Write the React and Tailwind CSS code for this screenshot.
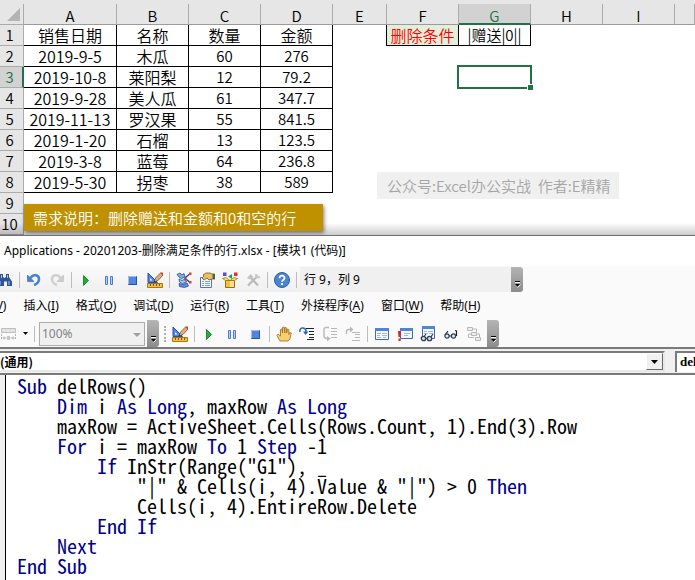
import React from "react";

const headers = ["A", "B", "C", "D", "E", "F", "G", "H", "I", ""];
const rows = [
  ["销售日期", "名称", "数量", "金额"],
  ["2019-9-5", "木瓜", "60", "276"],
  ["2019-10-8", "莱阳梨", "12", "79.2"],
  ["2019-9-28", "美人瓜", "61", "347.7"],
  ["2019-11-13", "罗汉果", "55", "841.5"],
  ["2019-1-20", "石榴", "13", "123.5"],
  ["2019-3-8", "蓝莓", "64", "236.8"],
  ["2019-5-30", "拐枣", "38", "589"],
  [],
  [],
];

const menus = [
  ["视图", "V"],
  ["插入", "I"],
  ["格式", "O"],
  ["调试", "D"],
  ["运行", "R"],
  ["工具", "T"],
  ["外接程序", "A"],
  ["窗口", "W"],
  ["帮助", "H"],
];

// "k" marks a keyword, everything else is plain code
const code = [
  [["k", "Sub"], ["", " delRows()"]],
  [["k", "    Dim"], ["", " i "], ["k", "As Long"], ["", ", maxRow "], ["k", "As Long"]],
  [["", "    maxRow = ActiveSheet.Cells(Rows.Count, 1).End(3).Row"]],
  [["k", "    For"], ["", " i = maxRow "], ["k", "To"], ["", " 1 "], ["k", "Step"], ["", " -1"]],
  [["k", "        If"], ["", " InStr(Range(\"G1\"), _"]],
  [["", "            \"|\" & Cells(i, 4).Value & \"|\") > 0 "], ["k", "Then"]],
  [["", "            Cells(i, 4).EntireRow.Delete"]],
  [["k", "        End If"]],
  [["k", "    Next"]],
  [["k", "End Sub"]],
];

function Icon({ children, label }) {
  return (
    <button type="button" aria-label={label} className="shrink-0 w-4 h-4">
      <svg viewBox="0 0 16 16" className="w-4 h-4 block">{children}</svg>
    </button>
  );
}

function Sep() {
  return <span className="w-px h-4 -mx-px bg-[#bdbdbd] shrink-0" />;
}

function Play() {
  return (
    <Icon label="运行">
      <path d="M5.500 3.500v10l5-5z" fill="#1fb033" stroke="#087a18" strokeWidth=".8" />
    </Icon>
  );
}

function Pause() {
  return (
    <Icon label="中断">
      <path d="M4.500 4.500h2v8h-2zM9.500 4.500h2v8h-2z" fill="#b9d0fa" stroke="#4a78d6" />
    </Icon>
  );
}

function Stop() {
  return (
    <Icon label="重新设置">
      <path d="M4 4h9v9H4z" fill="#5584dd" />
      <path d="M4.500 12.500v-8h8" fill="none" stroke="#9dbdf3" />
      <path d="M12.500 4.500v8h-8" fill="none" stroke="#2450b0" />
    </Icon>
  );
}

function Design() {
  return (
    <Icon label="设计模式">
      <path d="M1 1v9.500h9.500z" fill="#4f83e6" stroke="#2450b0" />
      <path d="M3 6v2.500h2.500z" fill="#fff" />
      <path d="M14 .5 8.500 6 7 10l4-1.500L16 3z" fill="#e0b27a" stroke="#5d3c1b" strokeWidth=".7" />
      <path d="m13.500 1 2 2.500L16 .5z" fill="#c23b2c" />
      <path d="m7 10 .5-1.500 1 1z" fill="#222" />
      <path d="M.5 11.500h15v4H.5z" fill="#f6bf3a" stroke="#b0760c" />
      <path d="M3.500 12v2m3-2v2m3-2v2m3-2v2" stroke="#7c5206" />
    </Icon>
  );
}

function Grip() {
  return (
    <button
      type="button"
      aria-label="工具栏选项"
      className="w-3 shrink-0 rounded-r-[3px] bg-linear-to-b from-[#b4b4b4] to-[#8c8c8c] flex items-end justify-center pb-1"
    >
      <svg viewBox="0 0 7 8" className="w-[7px] h-2">
        <path d="M1 1.500h5" stroke="#000" />
        <path d="M1 2.500h5" stroke="#fff" />
        <path d="M1 4h5L3.500 6.500z" fill="#000" />
        <path d="M3.500 7.500 6.500 4.500" stroke="#fff" strokeWidth=".9" />
      </svg>
    </button>
  );
}

function Sheet() {
  return (
    <section className="relative bg-white overflow-hidden">
      <div className="h-1 bg-[#e6e6e6]" />
      <table className="w-full table-fixed border-separate border-spacing-0 text-center text-[15px] leading-5 font-[350] text-black">
        <colgroup>
          <col className="w-6" />
          <col className="w-[93px]" />
          <col className="w-[72px]" />
          <col className="w-[72px]" />
          <col className="w-[72px]" />
          <col className="w-[54px]" />
          <col className="w-[72px]" />
          <col className="w-[72px]" />
          <col className="w-[72px]" />
          <col className="w-[72px]" />
          <col />
        </colgroup>
        <thead>
          <tr className="h-[21px] bg-[#e6e6e6]">
            <th className="p-0 border-b border-r border-[#ababab]">
              <svg viewBox="0 0 23 20" className="w-[23px] h-5 block">
                <path d="M20 4v13H7z" fill="#b4b4b4" />
              </svg>
            </th>
            {headers.map((h, i) => (
              <th
                key={i}
                className={`p-0 leading-[14px] font-[350] border-r border-r-[#ababab] ${
                  h === "G"
                    ? "pt-[5px] bg-[#d2d2d2] text-[#217346] border-b-2 border-b-[#217346]"
                    : "pt-1 border-b border-b-[#9b9b9b]"
                }`}
              >
                {h}
              </th>
            ))}
          </tr>
        </thead>
        <tbody>
          {rows.map((row, r) => (
            <tr key={r} className="h-[21px]">
              <th
                className={`p-0 font-[350] border-b border-b-[#ababab] ${
                  r === 2
                    ? "pr-[3px] bg-[#d2d2d2] text-[#217346] border-r-2 border-r-[#217346]"
                    : "pr-1 bg-[#e6e6e6] border-r border-r-[#ababab]"
                }`}
              >
                {r + 1}
              </th>
              {headers.map((h, c) => {
                if (row[c]) {
                  return (
                    <td
                      key={c}
                      className={`p-0 border-b border-r border-black ${r === 0 || c < 2 ? "text-base leading-5" : ""}`}
                    >
                      {row[c]}
                    </td>
                  );
                }
                if (r === 0 && h === "E") return <td key={c} className="p-0 border-r border-black" />;
                if (r === 0 && h === "F") {
                  return (
                    <td key={c} className="p-0 border-b border-r border-black bg-[#e2efda] text-[#ff0000] text-base leading-5">
                      删除条件
                    </td>
                  );
                }
                if (r === 0 && h === "G") {
                  return (
                    <td key={c} className="p-0 border-b border-r border-black">
                      |赠送|0||
                    </td>
                  );
                }
                if (r === 2 && h === "G") {
                  return (
                    <td key={c} className="p-0 relative">
                      <span className="absolute -left-0.5 -top-0.5 -right-px -bottom-px border-2 border-[#217346]" />
                      <span className="absolute -right-0.5 -bottom-0.5 w-1.5 h-1.5 border-l border-t border-white bg-[#217346]" />
                    </td>
                  );
                }
                return <td key={c} className="p-0" />;
              })}
            </tr>
          ))}
        </tbody>
      </table>
      <div className="absolute left-0 right-0 bottom-0 h-3 bg-linear-to-b from-transparent to-black/20" />
      <p className="absolute left-6 bottom-1 w-[299px] h-[27px] pl-[9px] bg-[#bf9000] text-white text-[15px] leading-[27px] font-[350] whitespace-nowrap shadow-[1px_2px_4px_rgba(0,0,0,0.5)]">
        需求说明：删除赠送和金额和0和空的行
      </p>
      <p className="absolute left-[377px] top-[172px] w-[242px] h-[27px] pl-[10px] bg-[#f0f0f0] text-[#a6a6a6] text-[15px] leading-[27px] font-[350] whitespace-pre">
        公众号:Excel办公实战  作者:E精精
      </p>
    </section>
  );
}

function StandardBar() {
  return (
    <div className="flex h-[25px] mt-px">
      <div className="flex items-center bg-linear-to-b from-[#fafafa] to-[#efefef]">
        <div className="flex items-center gap-[7px] -ml-[3px]">
          <Icon label="查找">
            <path d="M3 2h3v3l1.500 1L9 5V2h3v3l3 4.500V14h-5V9.500H7V14H1V9.500L3 5z" fill="#2f5596" />
            <path d="M4.500 3v3m6-3v3M3 9v4m9-4v4" stroke="#a9c3ee" />
          </Icon>
          <Sep />
          <Icon label="撤消">
            <path d="M4.500 6C7 2 13 2.500 13 7c0 3-2 5-5 6" fill="none" stroke="#4a80d8" strokeWidth="2.600" />
            <path d="M1.500 3v6.500H8z" fill="#4a80d8" stroke="#2f62b8" strokeWidth=".6" />
          </Icon>
          <Icon label="恢复">
            <path d="M11.500 6C9 2 3 2.500 3 7c0 3 2 5 5 6" fill="none" stroke="#d0d0d0" strokeWidth="2.600" />
            <path d="M14.500 3v6.500H8z" fill="#cdcdcd" stroke="#bababa" strokeWidth=".6" />
          </Icon>
          <Sep />
          <Play />
          <Pause />
          <Stop />
          <Design />
          <Sep />
          <Icon label="工程资源管理器">
            <path d="M1 2.500 4 1l2 2 2-1.500L9 5 5.500 6.500 3 5z" fill="#7eaaf0" stroke="#244c96" strokeWidth=".8" />
            <path d="m3 7 3 1.500L9 7l1.500 3-4 1.500L3.500 10z" fill="#a9c8f8" stroke="#244c96" strokeWidth=".8" />
            <path d="m3 11.500 4 1 4-1.500 1.500 3-4 1.500-5-1z" fill="#5b8ee3" stroke="#244c96" strokeWidth=".8" />
            <path d="m9 6 4-3.500M10 7l4 3.500" stroke="#244c96" strokeWidth="1.500" />
            <path d="M13 .5h2.500V3H13zM8 6h2.500v2.500H8zM13 9h2.500v2.500H13z" fill="#d8452f" />
          </Icon>
          <Icon label="属性窗口">
            <path d="M1.500 5.500h11v10h-11z" fill="#f3f7ff" stroke="#5577ae" />
            <path d="M3 9.500h2m1 0h5m-8 2h2m1 0h5m-8 2h2m1 0h5" stroke="#7d9bd0" />
            <path d="m4 3 3-2h4l2 1h3v5h-3l-3 1-2-2-3 2-2-2 2-2z" fill="#e8c06a" stroke="#7a5516" strokeWidth=".8" />
            <path d="M13.500 2H16v5h-2.500z" fill="#3d6b4a" />
          </Icon>
          <Icon label="对象浏览器">
            <path d="M3.500 8.500h9v7h-9z" fill="#f1c239" stroke="#9a6d0c" />
            <path d="M8 9h4v6H8z" fill="#fbe08a" />
            <path d="m3.500 8.500-3-2 3.500-1 4 3 4-3 3.500 1-3 2z" fill="#fadc7a" stroke="#9a6d0c" strokeWidth=".7" />
            <path d="M1 .5h3.500V4H1z" fill="#5b4fc2" />
            <path d="M10 2v5L6 4.500z" fill="#2e9a45" />
            <path d="M12 .5h3.500V4H12z" fill="#d0392b" />
          </Icon>
          <Icon label="工具箱">
            <path d="m3 13.500 8-8M6 6l7 7.500" stroke="#bababa" strokeWidth="2.200" />
            <path d="m2 6 3.500-4 3 2.500L5 7.500zM10 2l.5 4 4 .5L15 4l-2 .5-.5-2z" fill="#c4c4c4" />
          </Icon>
          <Sep />
          <Icon label="帮助">
            <circle cx="8" cy="8" r="7.500" fill="#4a84d8" stroke="#315c9f" />
            <path d="M5.500 6.200c0-3.700 5.200-3.200 5 0 0 1.800-2.500 1.800-2.500 3.600m0 1.200v2" fill="none" stroke="#fff" strokeWidth="1.800" />
          </Icon>
          <Sep />
        </div>
        <output className="ml-1 pl-1 w-[211px] h-full bg-[#f0f0f0] font-['Noto_Sans','Noto_Sans_CJK_SC',sans-serif] text-xs leading-[25px] text-black">
          行 9，列 9
        </output>
      </div>
      <Grip />
    </div>
  );
}

function MenuBar() {
  return (
    <nav className="flex items-center h-7 gap-[17px] -ml-8 font-['Noto_Sans','Noto_Sans_CJK_SC',sans-serif] text-xs text-black whitespace-nowrap">
      {menus.map(([name, key]) => (
        <button key={key} type="button" className="shrink-0">
          {name}(<u className="underline-offset-2">{key}</u>)
        </button>
      ))}
    </nav>
  );
}

function DebugBar() {
  return (
    <div className="flex h-[27px]">
      <div className="flex items-center gap-[7px]">
        <Icon label="对齐">
          <path d="M1.500 2.500h14v4h-14z" fill="#e2e2e2" stroke="#bdbdbd" />
          <path d="M1.500 8v6m14-6v6" stroke="#b5b5b5" strokeDasharray="2 1" />
          <path d="M2.500 12h4m4 0h4M4 10.500v3m9-3v3" stroke="#b5b5b5" />
          <path d="M7 10h3v4H7z" fill="#c8c8c8" />
        </Icon>
        <svg viewBox="0 0 5 3" className="w-[5px] h-[3px]">
          <path d="M0 0h5L2.500 3z" />
        </svg>
        <Sep />
        <div className="relative -ml-0.5 mr-0.5">
          <select
            aria-label="缩放"
            disabled
            className="block w-[106px] h-6 px-0.5 appearance-none border border-[#ababab] bg-[#f0f0f0] font-['Noto_Sans',sans-serif] text-[#838383] text-xs opacity-100"
          >
            <option>100%</option>
          </select>
          <svg viewBox="0 0 8 4" className="absolute right-1 top-[11px] w-2 h-1">
            <path d="M0 0h8L4 4z" fill="#a0a0a0" />
          </svg>
        </div>
      </div>
      <Grip />
      <div className="flex items-center gap-[7px] pl-[5px] pr-[5px]">
        <span className="w-0.5 h-4 -mr-px border-l-2 border-dotted border-[#b0b0b0]" />
        <Design />
        <Sep />
        <Play />
        <Pause />
        <Stop />
        <Sep />
        <Icon label="切换断点">
          <path
            d="M4 15 1 9.500 2 8l2.500 2V3.500L6 3l.5 4V1.500L8 1l.8 6V1.500l1.500.2L10.700 7l.6-4 1.500.5v5l1-2 1.500.5-1.500 6L12 15z"
            fill="#f7cf72"
            stroke="#9a6a1a"
            strokeWidth=".8"
          />
        </Icon>
        <Icon label="逐语句">
          <path d="M7 2.500h8M10 5.500h5M10 8.500h5M10 11.500h5M8 13.500h7" stroke="#222" />
          <path d="M1 6c-1-5 5-5 6-1.500V6" fill="none" stroke="#2f62c8" strokeWidth="1.600" />
          <path d="M4 5.500h5.500L6.500 9z" fill="#2f62c8" />
        </Icon>
        <Icon label="逐过程">
          <path d="M9 2.500h6M9 5.500h6M9 8.500h6M9 11.500h6" stroke="#b8b8b8" />
          <path d="M7 1.500H4Q2 1.500 2 4v6q0 2.500 4 2.500" fill="none" stroke="#b8b8b8" strokeWidth="1.400" />
          <path d="m5 10 3.500 2.500L5 15.500z" fill="#b8b8b8" />
        </Icon>
        <Icon label="跳出">
          <path d="M7 6.500h8M10 8.500h5M10 11.500h5M7 14.500h8" stroke="#b8b8b8" />
          <path d="M1.500 8V5.500q0-2 2-2H6" fill="none" stroke="#b8b8b8" strokeWidth="1.400" />
          <path d="m5 .5 3.500 3L5 6.500z" fill="#b8b8b8" />
        </Icon>
        <Sep />
        <Icon label="本地窗口">
          <path d="M1.500 2.500h13v11h-13z" fill="#f4f8ff" stroke="#3d67b0" />
          <path d="M1 2h14v3H1z" fill="#4f83de" />
          <path d="M3 7.500h4m1 0h5m-10 2h3m2 0h5m-10 2h4m2 0h3" stroke="#a3b7d8" />
        </Icon>
        <Icon label="立即窗口">
          <path d="M3.500 2.500h12v10h-12z" fill="#f4f8ff" stroke="#3d67b0" />
          <path d="M3 2h13v3H3z" fill="#4f83de" />
          <path d="M7 7.500h6m-6 2h4" stroke="#a3b7d8" />
          <path d="M1 5h3l-.5 6h-2zM1.500 12.500h2.200V15H1.500z" fill="#d8261c" />
        </Icon>
        <Icon label="监视窗口">
          <path d="M2.500.500h12v12h-12z" fill="#f4f8ff" stroke="#3d67b0" />
          <path d="M2 0h13v3H2z" fill="#4f83de" />
          <path d="M4 5.500h3m1 0h5m-9 2h4m1 0h4" stroke="#a3b7d8" />
          <path d="m3 12 3-4m4 4 3-4" stroke="#33404f" strokeWidth="1.200" />
          <circle cx="3.500" cy="12.500" r="2.200" fill="#c7dcf5" stroke="#33404f" strokeWidth="1.300" />
          <circle cx="9.500" cy="12.500" r="2.200" fill="#c7dcf5" stroke="#33404f" strokeWidth="1.300" />
        </Icon>
        <Icon label="快速监视">
          <path d="M2 9 5 5M13.500 10V5l-1.500-.5M6 10h2" fill="none" stroke="#222" strokeWidth="1.200" />
          <circle cx="4" cy="10" r="2.100" fill="#dceafa" stroke="#33404f" strokeWidth="1.200" />
          <circle cx="10.500" cy="10" r="2.100" fill="#dceafa" stroke="#33404f" strokeWidth="1.200" />
        </Icon>
        <Icon label="调用堆栈">
          <path d="M1.500 1.500h5v3h-5zM5.500 6.500h5v3h-5zM9.500 11.500h5v3h-5z" fill="#eee" stroke="#b8b8b8" />
          <path d="M7 3h3.500v3M5 8H2.500v3.500H8M11 8h2.500v3" fill="none" stroke="#b8b8b8" />
        </Icon>
      </div>
      <Grip />
    </div>
  );
}

function ComboRow() {
  return (
    <div className="flex items-start gap-2.5 h-7 pt-0.5 bg-[#f0f0f0] border-t-2 border-b-2 border-[#7a7a7a]">
      <div className="relative flex-1 h-[21px] border-t-2 border-t-[#7a7a7a] border-b-2 border-b-[#e8e8e8] border-r-2 border-r-[#e8e8e8] bg-white">
        <select
          aria-label="对象"
          className="block w-full h-[17px] appearance-none bg-white text-xs leading-[17px] font-bold text-black"
        >
          <option>(通用)</option>
        </select>
        <span className="pointer-events-none absolute right-0 top-0 w-[17px] h-[17px] bg-[#f0f0f0] border border-t-white border-l-white border-r-[#696969] border-b-[#696969] flex items-center justify-center">
          <svg viewBox="0 0 7 4" className="w-[7px] h-1">
            <path d="M0 0h7L3.500 4z" />
          </svg>
        </span>
      </div>
      <div className="w-5 h-[21px] shrink-0 overflow-hidden border-t-2 border-l-2 border-[#7a7a7a] bg-white">
        <select
          aria-label="过程"
          className="block w-20 h-[17px] pl-[3px] appearance-none bg-white font-['Liberation_Serif',serif] text-[13px] leading-[17px] font-bold text-black"
        >
          <option>delRows</option>
        </select>
      </div>
    </div>
  );
}

function CodePane() {
  return (
    <div className="flex flex-1 bg-white">
      <div className="w-[6px] shrink-0 bg-[#f0f0f0] border-r border-black" />
      <pre className="pl-[11px] pt-px font-['Noto_Sans_Mono_CJK_SC','Liberation_Mono',monospace] text-[20px] leading-5">
        {code.map((line, i) => (
          <div key={i}>
            {line.map(([kind, text], j) => (
              <span key={j} className={kind === "k" ? "text-[#00008b]" : "text-black"}>{text}</span>
            ))}
          </div>
        ))}
      </pre>
    </div>
  );
}

export default function App() {
  return (
    <main className="min-h-screen flex flex-col bg-white overflow-hidden font-['Noto_Sans_CJK_SC',sans-serif]">
      <Sheet />
      <section className="flex flex-col flex-1 border-t border-[#6f6f6f]">
        <h1 className="h-[30px] pl-1 font-['Noto_Sans','Noto_Sans_CJK_SC',sans-serif] text-xs leading-[30px] text-black whitespace-nowrap">
          Applications - 20201203-删除满足条件的行.xlsx - [模块1 (代码)]
        </h1>
        <div className="bg-[#fafafa]">
          <StandardBar />
          <MenuBar />
          <DebugBar />
        </div>
        <ComboRow />
        <CodePane />
      </section>
    </main>
  );
}
